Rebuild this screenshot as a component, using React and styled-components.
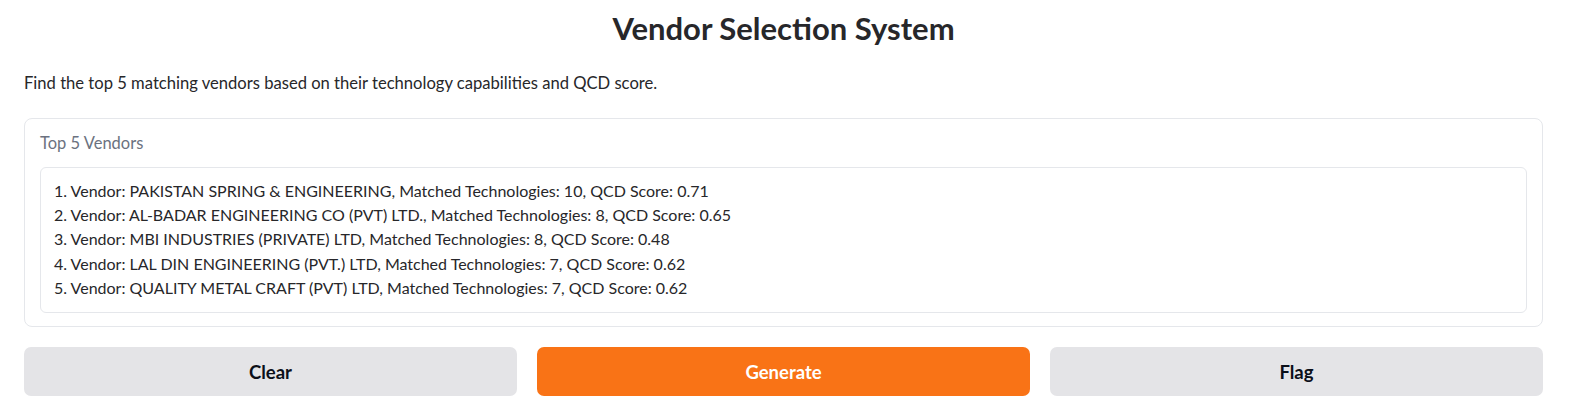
import React from 'react'
import styled, { createGlobalStyle } from 'styled-components'

const GlobalStyle = createGlobalStyle`
  body {
    margin: 0;
    background: #ffffff;
    font-family: Lato, "Noto Sans", sans-serif;
    color: #1f2937;
  }
`

const Page = styled.div`
  display: flex;
  flex-direction: column;
  padding: 8px 42px 0 24px;
`

const Title = styled.h1`
  margin: 0;
  text-align: center;
  font-size: 31px;
  line-height: 40px;
  font-weight: 700;
  color: #27272a;
`

const Description = styled.p`
  margin: 23px 0 0;
  font-size: 16.6px;
  line-height: 24px;
  color: #27272a;
`

const Block = styled.div`
  margin-top: 23px;
  border: 1px solid #e5e7eb;
  border-radius: 8px;
  padding: 12px 15px 13px;
  display: flex;
  flex-direction: column;
  gap: 12px;
`

const Label = styled.span`
  font-size: 16.5px;
  line-height: 24px;
  color: #6b7280;
`

const Output = styled.div`
  border: 1px solid #e5e7eb;
  border-radius: 6px;
  padding: 11px 13px 12px;
  font-size: 16px;
  line-height: 24.2px;
  color: #27272a;
`

const Line = styled.div`
  white-space: nowrap;
`

const Actions = styled.div`
  margin-top: 20px;
  display: grid;
  grid-template-columns: repeat(3, 1fr);
  gap: 20px;
`

const Button = styled.button`
  height: 49px;
  border: none;
  border-radius: 7px;
  font-family: inherit;
  font-size: 18.5px;
  font-weight: 700;
  background: ${(p) => (p.$primary ? '#f97316' : '#e4e4e7')};
  color: ${(p) => (p.$primary ? '#ffffff' : '#0b0f19')};
  cursor: pointer;
`

const vendors = [
  'PAKISTAN SPRING & ENGINEERING, Matched Technologies: 10, QCD Score: 0.71',
  'AL-BADAR ENGINEERING CO (PVT) LTD., Matched Technologies: 8, QCD Score: 0.65',
  'MBI INDUSTRIES (PRIVATE) LTD, Matched Technologies: 8, QCD Score: 0.48',
  'LAL DIN ENGINEERING (PVT.) LTD, Matched Technologies: 7, QCD Score: 0.62',
  'QUALITY METAL CRAFT (PVT) LTD, Matched Technologies: 7, QCD Score: 0.62',
]

export default function App() {
  return (
    <>
      <GlobalStyle />
      <Page>
        <Title>Vendor Selection System</Title>
        <Description>
          Find the top 5 matching vendors based on their technology capabilities and QCD score.
        </Description>
        <Block>
          <Label>Top 5 Vendors</Label>
          <Output>
            {vendors.map((v, i) => (
              <Line key={i}>
                {i + 1}. Vendor: {v}
              </Line>
            ))}
          </Output>
        </Block>
        <Actions>
          <Button>Clear</Button>
          <Button $primary>Generate</Button>
          <Button>Flag</Button>
        </Actions>
      </Page>
    </>
  )
}
